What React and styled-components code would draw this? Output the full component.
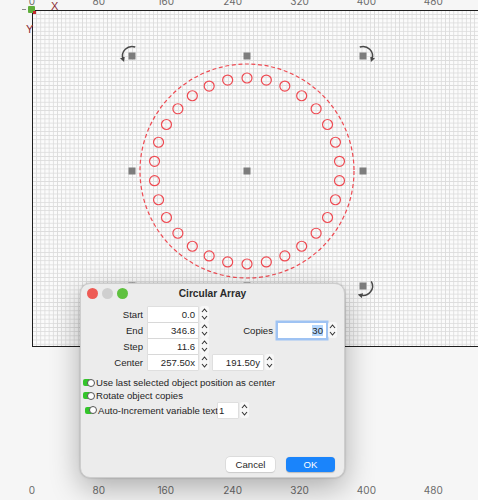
import React from "react";
import styled, {createGlobalStyle} from "styled-components";

const GlobalStyle = createGlobalStyle`
    html, body {
        margin: 0;
        padding: 0;
        background: #f6f6f6;
    }
`;

const Page = styled.div`
    position: relative;
    width: 478px;
    height: 500px;
    overflow: hidden;
    background: #f6f6f6;
    font-family: "Liberation Sans", "Inter", sans-serif;
    color: #1f1f1f;
`;

const Ruler = styled.div`
    display: flex;
    height: ${p => p.$height}px;
    margin-left: -1.5px;
    padding-top: ${p => p.$pad || 0}px;
    overflow: hidden;
`;

const RulerLabel = styled.div`
    flex: 0 0 66.9px;
    text-align: center;
    font-family: "Inter", sans-serif;
    font-size: 10px;
    line-height: 10px;
    color: #6b6b6b;
    margin-top: ${p => p.$top ? -4 : 0}px;
`;

const Canvas = styled.div`
    margin-left: 32px;
    height: 335px;
    border-top: 1.5px solid #1e1e1e;
    border-left: 1.5px solid #1e1e1e;
    border-bottom: 1.5px solid #1e1e1e;
    background-color: #fbfbfb;
    background-image:
        linear-gradient(to right, #dcdcdc 1px, transparent 1px),
        linear-gradient(to bottom, #dcdcdc 1px, transparent 1px);
    background-size: 4.18px 4.18px;
    background-position: -1px -1px;
`;

const Origin = styled.div`
    position: absolute;
    left: 28px;
    top: 6px;
    width: 7px;
    height: 7px;
    background: #5fae3b;
    border-radius: 1px;
    &::after {
        content: "";
        position: absolute;
        right: -1px;
        bottom: -1px;
        width: 3px;
        height: 3px;
        background: #c4262c;
    }
    &::before {
        content: "";
        position: absolute;
        left: -6px;
        top: 3px;
        width: 4px;
        height: 1px;
        background: #8a8a8a;
    }
`;

const AxisLetter = styled.div`
    position: absolute;
    left: ${p => p.$x}px;
    top: ${p => p.$y}px;
    font-size: 11px;
    line-height: 11px;
    color: #8a2a33;
`;

const Dialog = styled.div`
    position: absolute;
    left: 80px;
    top: 283px;
    width: 265px;
    height: 195px;
    box-sizing: border-box;
    background: #ececec;
    border: 1px solid #cdcdcd;
    border-radius: 10px;
    box-shadow: 0 10px 30px rgba(0, 0, 0, 0.3), 0 0 2px rgba(0, 0, 0, 0.25);
    display: flex;
    flex-direction: column;
`;

const TitleBar = styled.div`
    display: grid;
    grid-template-columns: 1fr auto 1fr;
    align-items: center;
    height: 19px;
    padding: 0 6px;
`;

const Lights = styled.div`
    display: flex;
    gap: 4px;
`;

const Light = styled.span`
    width: 11px;
    height: 11px;
    border-radius: 50%;
    background: ${p => p.$color};
`;

const Title = styled.div`
    font-size: 10.2px;
    font-weight: 700;
    color: #2a2a2a;
`;

const Form = styled.div`
    display: flex;
    flex-direction: column;
    padding-top: 3px;
`;

const Row = styled.div`
    display: flex;
    align-items: center;
    height: 16px;
`;

const Label = styled.div`
    width: ${p => p.$width}px;
    box-sizing: border-box;
    padding-right: 5px;
    text-align: right;
    font-size: 9.6px;
`;

const Field = styled.div`
    width: ${p => p.$width}px;
    height: 15px;
    box-sizing: border-box;
    margin-left: ${p => p.$gap || 0}px;
    background: #fff;
    box-shadow: ${p => p.$focused ? "0 0 0 2.5px #9fc3f3" : "0 0 0 0.5px #d2d2d2"};
    font-size: 9.6px;
    line-height: 15px;
    text-align: right;
    padding-right: 3px;
    white-space: nowrap;
`;

const Selected = styled.span`
    background: #b3d6fd;
`;

const StepperBox = styled.div`
    width: 9px;
    height: 16px;
    margin-left: 2px;
    display: flex;
`;

const Checks = styled.div`
    display: flex;
    flex-direction: column;
    padding-top: 6px;
`;

const CheckRow = styled.div`
    display: flex;
    align-items: center;
    height: ${p => p.$height || 13}px;
    padding-left: ${p => p.$indent || 2}px;
    font-size: 9.6px;
`;

const Toggle = styled.span`
    position: relative;
    width: 12px;
    height: 8px;
    margin-right: 1px;
    &::before {
        content: "";
        position: absolute;
        left: 0;
        top: 0.5px;
        width: 8px;
        height: 7px;
        border-radius: 2px;
        background: #33c52a;
    }
    &::after {
        content: "";
        position: absolute;
        right: 0;
        top: 0;
        width: 6px;
        height: 6px;
        border-radius: 50%;
        background: #fff;
        border: 1px solid #555;
    }
`;

const SmallField = styled(Field)`
    text-align: left;
    padding-left: 1px;
`;

const Footer = styled.div`
    margin-top: auto;
    display: flex;
    justify-content: flex-end;
    gap: 11px;
    padding: 0 9px 5px 0;
`;

const Button = styled.div`
    width: 49px;
    height: 15px;
    border-radius: 4px;
    font-size: 9.6px;
    line-height: 15px;
    text-align: center;
    background: ${p => p.$primary ? "#1a84fb" : "#fff"};
    color: ${p => p.$primary ? "#fff" : "#1f1f1f"};
    box-shadow: ${p => p.$primary ? "0 0.5px 1px rgba(0,0,0,0.2)" : "0 0 0 0.5px #cfcfcf, 0 0.5px 1px rgba(0,0,0,0.15)"};
`;

const Stepper = () => (
    <StepperBox>
        <svg width="9" height="16" viewBox="0 0 9 16">
            <rect x="0" y="0" width="9" height="16" rx="2.5" fill="#f7f7f7" />
            <path d="M2 6 L4.5 3 L7 6" fill="none" stroke="#333" strokeWidth="1.1" />
            <path d="M2 10 L4.5 13 L7 10" fill="none" stroke="#333" strokeWidth="1.1" />
        </svg>
    </StepperBox>
);

const CX = 214;
const CY = 160;

const polar = (cx, cy, r, deg) => {
    const a = deg * Math.PI / 180;
    return [cx + r * Math.cos(a), cy + r * Math.sin(a)];
};

const RotateArrow = ({cx, cy, from, to}) => {
    const [x1, y1] = polar(cx, cy, 9.5, from);
    const [x2, y2] = polar(cx, cy, 9.5, to);
    const sweep = to > from ? 1 : 0;
    return (
        <path
            d={`M${x1} ${y1} A9.5 9.5 0 0 ${sweep} ${x2} ${y2}`}
            fill="none"
            stroke="#4a4a4a"
            strokeWidth="1.5"
            markerEnd="url(#arrowhead)"
        />
    );
};

const Drawing = () => {
    const handlesX = [99, 214, 330];
    const handlesY = [45, 160, 275];
    const copies = Array.from({length: 30}, (_, i) => polar(CX, CY, 93, -90 + i * 12));
    return (
        <svg width="446" height="335" style={{display: "block"}}>
            <defs>
                <marker id="arrowhead" markerWidth="5" markerHeight="5" refX="2" refY="2.5" orient="auto" markerUnits="userSpaceOnUse">
                    <path d="M0 0 L5 2.5 L0 5 Z" fill="#4a4a4a" />
                </marker>
            </defs>
            <circle cx={CX} cy={CY} r="107" fill="none" stroke="#ee4a52" strokeWidth="1.2" strokeDasharray="4 2.6" />
            {copies.map(([x, y], i) => (
                <circle key={i} cx={x} cy={y} r="5" fill="none" stroke="#ee4a52" strokeWidth="1.2" />
            ))}
            {handlesY.map(y => handlesX.map(x => (
                <rect key={`${x}-${y}`} x={x - 3.5} y={y - 3.5} width="7" height="7" fill="#7d7d7d" />
            )))}
            <RotateArrow cx={99} cy={45} from={-70} to={-200} />
            <RotateArrow cx={330} cy={45} from={-110} to={20} />
            <RotateArrow cx={330} cy={275} from={-30} to={105} />
        </svg>
    );
};

const labels = [0, 80, 160, 240, 320, 400, 480];

const App = () => {
    return (
        <Page>
            <GlobalStyle />
            <Ruler $height={10}>
                {labels.map(l => <RulerLabel key={l} $top>{l}</RulerLabel>)}
            </Ruler>
            <Canvas>
                <Drawing />
            </Canvas>
            <Ruler $height={16} $pad={138}>
                {labels.map(l => <RulerLabel key={l}>{l}</RulerLabel>)}
            </Ruler>
            <Origin />
            <AxisLetter $x={51} $y={1}>X</AxisLetter>
            <AxisLetter $x={26} $y={24}>Y</AxisLetter>

            <Dialog>
                <TitleBar>
                    <Lights>
                        <Light $color="#ee5b55" />
                        <Light $color="#cfcfcf" />
                        <Light $color="#5fc13f" />
                    </Lights>
                    <Title>Circular Array</Title>
                    <div />
                </TitleBar>
                <Form>
                    <Row>
                        <Label $width={67}>Start</Label>
                        <Field $width={50}>0.0</Field>
                        <Stepper />
                    </Row>
                    <Row>
                        <Label $width={67}>End</Label>
                        <Field $width={50}>346.8</Field>
                        <Stepper />
                        <Label $width={69}>Copies</Label>
                        <Field $width={48} $focused><Selected>30</Selected></Field>
                        <Stepper />
                    </Row>
                    <Row>
                        <Label $width={67}>Step</Label>
                        <Field $width={50}>11.6</Field>
                        <Stepper />
                    </Row>
                    <Row>
                        <Label $width={67}>Center</Label>
                        <Field $width={50}>257.50x</Field>
                        <Stepper />
                        <Field $width={50} $gap={4}>191.50y</Field>
                        <Stepper />
                    </Row>
                </Form>
                <Checks>
                    <CheckRow><Toggle />Use last selected object position as center</CheckRow>
                    <CheckRow><Toggle />Rotate object copies</CheckRow>
                    <CheckRow $height={16} $indent={4}>
                        <Toggle />Auto-Increment variable text
                        <SmallField $width={20}>1</SmallField>
                        <Stepper />
                    </CheckRow>
                </Checks>
                <Footer>
                    <Button>Cancel</Button>
                    <Button $primary>OK</Button>
                </Footer>
            </Dialog>
        </Page>
    );
};

export default App;
